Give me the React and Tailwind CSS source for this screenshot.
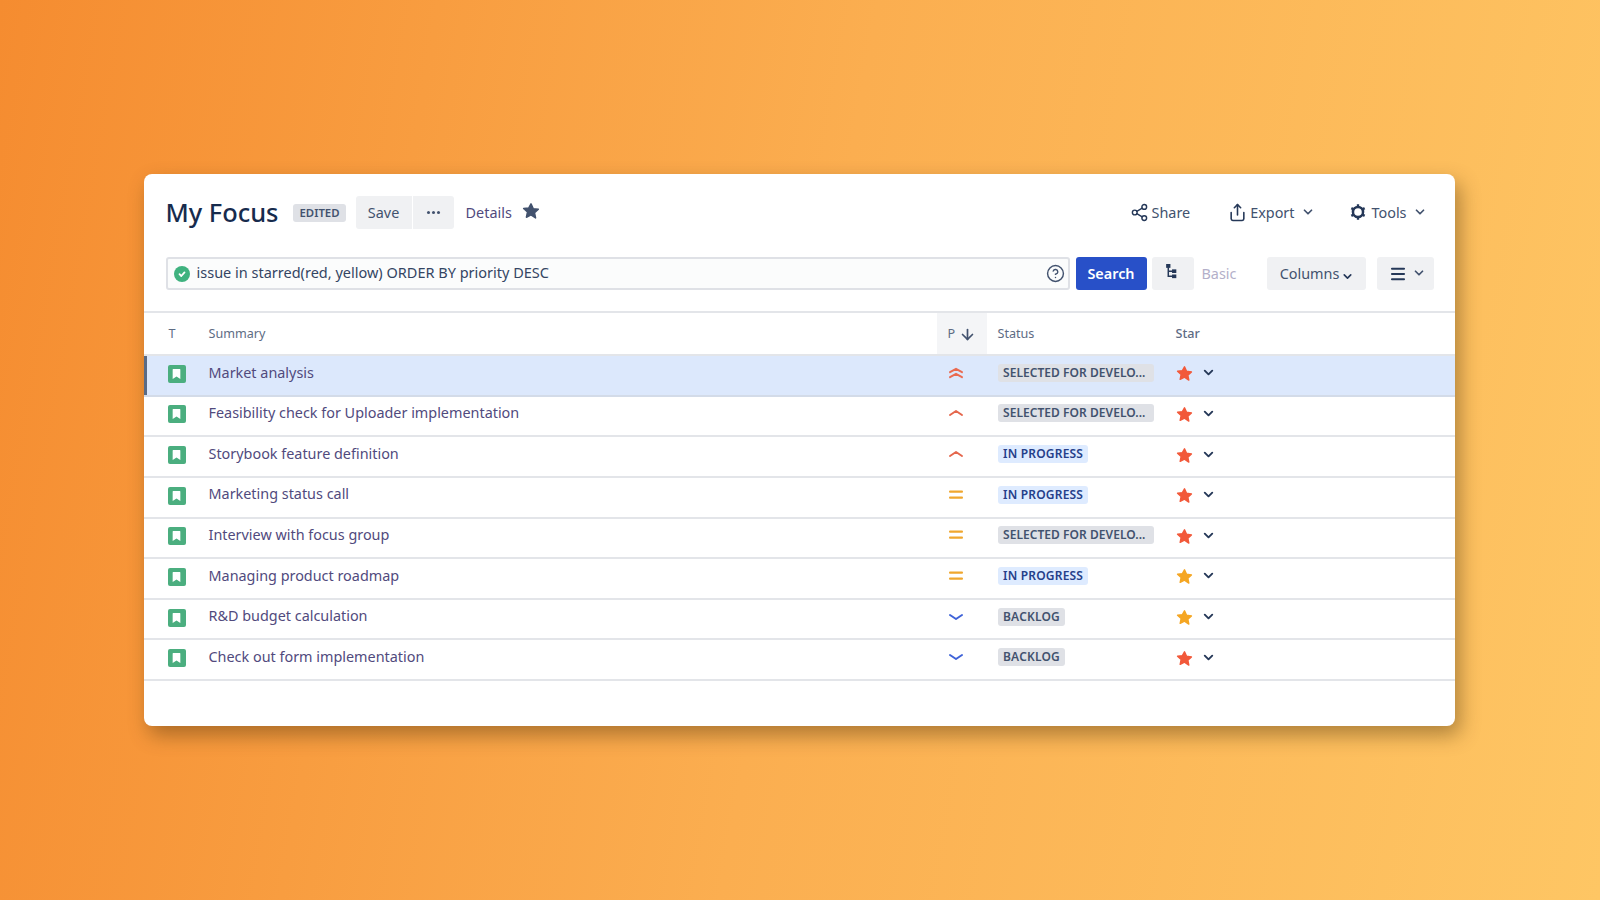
import { ChevronDown, CircleHelp, Share2, Share, ArrowDown, Menu } from "lucide-react";

const ROWS = [
  { title: "Market analysis", priority: "highest", status: "selected", star: "red", active: true },
  { title: "Feasibility check for Uploader implementation", priority: "high", status: "selected", star: "red" },
  { title: "Storybook feature definition", priority: "high", status: "progress", star: "red" },
  { title: "Marketing status call", priority: "medium", status: "progress", star: "red" },
  { title: "Interview with focus group", priority: "medium", status: "selected", star: "red" },
  { title: "Managing product roadmap", priority: "medium", status: "progress", star: "yellow" },
  { title: "R&D budget calculation", priority: "low", status: "backlog", star: "yellow" },
  { title: "Check out form implementation", priority: "low", status: "backlog", star: "red" },
];

function StarIcon({ className }) {
  return (
    <svg viewBox="0 0 24 24" className={className} fill="currentColor" stroke="currentColor" strokeWidth="2" strokeLinejoin="round">
      <path d="M12 2.5l2.9 6.4 6.9.8-5.1 4.7 1.4 6.9L12 17.1l-6.1 3.2 1.4-6.9-5.1-4.7 6.9-.8z" />
    </svg>
  );
}

function GearIcon() {
  return (
    <svg viewBox="0 0 20 20" className="h-[18px] w-[18px] text-[#253858]" fill="none" stroke="currentColor">
      <circle cx="10" cy="10" r="5.6" strokeWidth="2.8" />
      <path strokeWidth="2.6" d="M10 1.5v2.5M10 16v2.5M2.6 5.7l2.2 1.3M15.2 13l2.2 1.3M2.6 14.3l2.2-1.3M15.2 7l2.2-1.3" />
    </svg>
  );
}

function StoryIcon() {
  return (
    <span className="flex h-[18px] w-[18px] items-center justify-center rounded-[2px] bg-[#4bae7f]">
      <svg viewBox="0 0 10 12" className="h-[10px] w-[9px]" fill="#fff">
        <path d="M1 0h8a.6.6 0 0 1 .6.6V12L5 9 .4 12V.6A.6.6 0 0 1 1 0z" />
      </svg>
    </span>
  );
}

function PriorityIcon({ level }) {
  if (level === "medium") {
    return (
      <svg viewBox="0 0 16 10" className="h-[10px] w-[16px]" fill="#f0a72e">
        <rect x="1" y="0.5" width="14" height="2.2" rx="1" />
        <rect x="1" y="6.5" width="14" height="2.2" rx="1" />
      </svg>
    );
  }
  if (level === "highest") {
    return (
      <svg viewBox="0 0 16 12" className="h-[12px] w-[16px]" fill="none" stroke="#ea6a50" strokeWidth="1.9" strokeLinecap="round" strokeLinejoin="round">
        <path d="M2 5.2l6-3.4 6 3.4" />
        <path d="M2 10.2l6-3.4 6 3.4" />
      </svg>
    );
  }
  if (level === "high") {
    return (
      <svg viewBox="0 0 16 10" className="h-[10px] w-[16px]" fill="none" stroke="#e5674d" strokeWidth="2" strokeLinecap="round" strokeLinejoin="round">
        <path d="M2 7l6-4 6 4" />
      </svg>
    );
  }
  return (
    <svg viewBox="0 0 16 10" className="h-[10px] w-[16px]" fill="none" stroke="#3f63d8" strokeWidth="2" strokeLinecap="round" strokeLinejoin="round">
      <path d="M2 3l6 4 6-4" />
    </svg>
  );
}

function Status({ kind }) {
  if (kind === "selected") {
    return <span className="rounded-[3px] bg-[#dfe1e6] pr-[9px] pl-[5px] text-[12px] leading-[18px] font-semibold tracking-[0.05px] text-[#42526e]">SELECTED FOR DEVELO...</span>;
  }
  if (kind === "progress") {
    return <span className="rounded-[3px] bg-[#deebff] px-[5px] text-[12px] leading-[18px] font-semibold tracking-[0.2px] text-[#253f8a]">IN PROGRESS</span>;
  }
  return <span className="rounded-[3px] bg-[#dfe1e6] px-[5px] text-[12px] leading-[18px] font-semibold tracking-[0.2px] text-[#42526e]">BACKLOG</span>;
}

function Row({ row }) {
  return (
    <div className={`flex h-[40.625px] items-center border-b-2 pb-[3px] ${row.active ? "border-[#d3dbe8] bg-[#dce8fc]" : "border-[#e3e5e9] bg-white"}`}>
      <div className={`flex w-[65px] shrink-0 items-center self-stretch pl-[24px] ${row.active ? "-mb-[3px] border-l-[3px] border-[#5a6b85] pb-[3px] !pl-[21px]" : ""}`}>
        <StoryIcon />
      </div>
      <div className="w-[739px] shrink-0 -mt-[3px] text-[14.4px] text-[#514a7d]">{row.title}</div>
      <div className="flex w-[50.5px] shrink-0 justify-start -mt-[2px]">
        <PriorityIcon level={row.priority} />
      </div>
      <div className="flex w-[177.5px] shrink-0 items-center -mt-[2px]">
        <Status kind={row.status} />
      </div>
      <StarIcon className={`h-[17px] w-[17px] ${row.star === "red" ? "text-[#f2593a]" : "text-[#f5a623]"}`} />
      <ChevronDown size={15} strokeWidth={3} className="ml-[8px] -mt-[2px] text-[#253858]" />
    </div>
  );
}

export default function App() {
  return (
    <div className="flex h-screen items-center justify-center bg-linear-[100deg,#f58c30,#fbae50_50%,#fec664] font-['Noto_Sans',sans-serif]">
      <div className="mr-[2px] h-[552px] w-[1311px] overflow-hidden rounded-[8px] bg-white shadow-[5px_9px_20px_rgba(70,45,10,0.42)]">
        <div className="mt-[22px] flex h-[33px] items-center pr-[28px] pl-[22px] text-[14.4px] text-[#42526e]">
          <h1 className="text-[25.4px] leading-none font-medium text-[#172b4d]">My Focus</h1>
          <span className="ml-[15px] rounded-[3px] bg-[#dfe1e6] px-[6px] text-[11.4px] leading-[18px] font-semibold text-[#42526e]">EDITED</span>
          <button className="ml-[10px] h-[33px] w-[56px] rounded-l-[3px] bg-[#f0f1f3]">Save</button>
          <button className="ml-[2px] flex h-[33px] w-[41px] -translate-x-[1px] items-center justify-center gap-[2px] rounded-r-[3px] bg-[#f0f1f3]">
            <span className="h-[3px] w-[3px] rounded-full bg-[#42526e]" />
            <span className="h-[3px] w-[3px] rounded-full bg-[#42526e]" />
            <span className="h-[3px] w-[3px] rounded-full bg-[#42526e]" />
          </button>
          <span className="ml-[11px] text-[#514a7d]">Details</span>
          <StarIcon className="ml-[10px] -mt-[3px] h-[18px] w-[18px] text-[#42526e]" />
          <div className="ml-auto flex items-center">
            <Share2 size={19} strokeWidth={1.8} className="text-[#253858]" />
            <span className="ml-[3px]">Share</span>
            <Share size={19} strokeWidth={2} className="ml-[38px] text-[#253858]" />
            <span className="ml-[3px]">Export</span>
            <ChevronDown size={14} strokeWidth={3} className="ml-[7px] text-[#42526e]" />
            <span className="ml-[34px]"><GearIcon /></span>
            <span className="ml-[4px]">Tools</span>
            <ChevronDown size={14} strokeWidth={3} className="ml-[6px] text-[#42526e]" />
          </div>
        </div>

        <div className="mt-[28px] flex h-[33px] items-center pl-[22px] text-[14.4px]">
          <div className="flex h-[33px] w-[904px] items-center rounded-[3px] border-2 border-[#dfe1e6] bg-[#fbfcfc] pr-[3px] pl-[6px] text-[#344563]">
            <span className="flex h-[16px] w-[16px] items-center justify-center rounded-full bg-[#3fb27f]">
              <svg viewBox="0 0 10 10" className="h-[10px] w-[10px]" fill="none" stroke="#fff" strokeWidth="1.8" strokeLinecap="round" strokeLinejoin="round">
                <path d="M2.5 5.2l1.8 1.8 3.2-3.6" />
              </svg>
            </span>
            <span className="ml-[7px] -mt-[1px] text-[14.5px]">issue in starred(red, yellow) ORDER BY priority DESC</span>
            <CircleHelp size={19} strokeWidth={1.8} className="ml-auto text-[#42526e]" />
          </div>
          <button className="ml-[6px] h-[33px] w-[71px] rounded-[3px] bg-[#2850c8] font-semibold text-white">Search</button>
          <button className="ml-[5px] flex h-[33px] w-[42px] items-center justify-center rounded-[3px] bg-[#f0f1f3]">
            <svg viewBox="0 0 10 14" className="-mt-[5px] -ml-[2px] h-[15px] w-[11px]" fill="#253858" stroke="#253858" strokeWidth="1.4">
              <rect x="0" y="0" width="4" height="3.6" stroke="none" />
              <rect x="5.5" y="5" width="4" height="3.4" stroke="none" />
              <rect x="5.5" y="9.8" width="4" height="3.4" stroke="none" />
              <path d="M2 3v8.5h4M2 6.7h4" fill="none" />
            </svg>
          </button>
          <span className="ml-[8px] text-[#b3afc9]">Basic</span>
          <button className="ml-[31px] flex h-[33px] w-[99px] items-center justify-center rounded-[3px] bg-[#f0f1f3] text-[#42526e]">
            Columns
            <ChevronDown size={13} strokeWidth={3} className="ml-[2px] mt-[5px] text-[#253858]" />
          </button>
          <button className="ml-[11px] flex h-[33px] w-[57px] items-center justify-center rounded-[3px] bg-[#f0f1f3] pl-[3px]">
            <Menu size={18} strokeWidth={2.8} className="text-[#253858]" />
            <ChevronDown size={14} strokeWidth={3} className="ml-[5px] -mt-[2px] text-[#42526e]" />
          </button>
        </div>

        <div className="mt-[21px] flex h-[45px] items-stretch border-t-2 border-b-2 border-[#e3e5e9] text-[12.6px] text-[#5e6c84]">
          <div className="flex w-[65px] shrink-0 items-center pt-[2px] pl-[25px]">T</div>
          <div className="flex w-[728px] shrink-0 items-center pt-[2px]">Summary</div>
          <div className="flex w-[50px] shrink-0 items-center bg-[#f4f5f7] pt-[2px] pl-[11px]">
            P
            <ArrowDown size={17} strokeWidth={2.4} className="ml-[4px] text-[#42526e]" />
          </div>
          <div className="flex w-[178px] shrink-0 items-center pt-[2px] pl-[11px]">Status</div>
          <div className="flex items-center pt-[2px] pl-[11px] font-medium">Star</div>
        </div>

        {ROWS.map((row) => (
          <Row key={row.title} row={row} />
        ))}
      </div>
    </div>
  );
}
